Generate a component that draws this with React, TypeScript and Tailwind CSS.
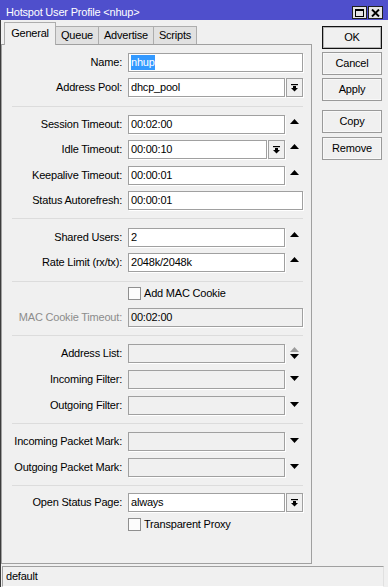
import React from "react";

type Kind = "full" | "spin" | "drop" | "dropspin" | "down" | "updown";

function UpTri({ gray }: { gray?: boolean }) {
  return (
    <svg width="9" height="5" viewBox="0 0 9 5" className="block">
      <polygon points="0,5 9,5 4.5,0" fill={gray ? "#9c9c9c" : "#000"} />
    </svg>
  );
}

function DownTri() {
  return (
    <svg width="9" height="5" viewBox="0 0 9 5" className="block">
      <polygon points="0,0 9,0 4.5,5" fill="#000" />
    </svg>
  );
}

function DropBtn() {
  return (
    <div className="w-[17px] h-[19px] shrink-0 border border-[#a0a0a0] bg-[#f0f0f0] shadow-[1px_1px_0_#ffffff] flex items-center justify-center">
      <svg width="7" height="8" viewBox="0 0 7 8" className="block">
        <rect x="0" y="0" width="7" height="1.2" fill="#000" />
        <rect x="2" y="2" width="3" height="2" fill="#000" />
        <polygon points="0,4 7,4 3.5,7.6" fill="#000" />
      </svg>
    </div>
  );
}

function Row({
  label,
  value,
  kind = "full",
  disabled,
  labelGray,
  selected,
  className,
}: {
  label: string;
  value?: string;
  kind?: Kind;
  disabled?: boolean;
  labelGray?: boolean;
  selected?: boolean;
  className?: string;
}) {
  return (
    <div className={`flex h-[19px] ${className ?? ""}`}>
      <div
        className={`w-[120px] shrink-0 flex items-center justify-end whitespace-nowrap ${
          labelGray ? "text-[#8c8c8c]" : "text-black"
        }`}
      >
        {label}
      </div>
      <div className="ml-[6px] w-[175px] flex gap-[1px]">
        <div
          className={`flex-1 min-w-0 h-[19px] border border-[#a0a0a0] shadow-[1px_1px_0_#ffffff] ${
            disabled ? "bg-[#f0f0f0]" : "bg-white"
          } flex items-center px-[2px] whitespace-nowrap overflow-hidden text-black`}
        >
          {selected ? (
            <span className="bg-[#3399ff] text-white leading-[15px] inline-block">{value}</span>
          ) : (
            value
          )}
        </div>
        {(kind === "drop" || kind === "dropspin") && <DropBtn />}
        {(kind === "spin" || kind === "dropspin") && (
          <div className="w-[17px] shrink-0 flex justify-center pt-[4px]">
            <UpTri />
          </div>
        )}
        {kind === "down" && (
          <div className="w-[17px] shrink-0 flex justify-center pt-[6px]">
            <DownTri />
          </div>
        )}
        {kind === "updown" && (
          <div className="w-[17px] shrink-0 flex flex-col items-center pt-[3px] gap-[2px]">
            <UpTri gray />
            <DownTri />
          </div>
        )}
      </div>
    </div>
  );
}

function Sep({ className }: { className?: string }) {
  return <div className={`ml-[10px] w-[291px] h-px bg-[#dcdcdc] ${className ?? ""}`} />;
}

function Check({ label, className }: { label: string; className?: string }) {
  return (
    <div className={`flex h-[13px] items-center ${className ?? ""}`}>
      <div className="w-[126px] shrink-0" />
      <div className="w-[13px] h-[13px] shrink-0 border border-[#8f8f8f] bg-[#fcfcfc]" />
      <span className="ml-[3px] whitespace-nowrap text-black">{label}</span>
    </div>
  );
}

function Btn({ children, def, className }: { children: React.ReactNode; def?: boolean; className?: string }) {
  return (
    <div
      className={`w-[60px] h-[23px] flex items-center justify-center bg-[#f0f0f0] text-black ${
        def
          ? "border border-[#111111] shadow-[inset_0_0_0_1px_#b4b4b4]"
          : "border border-[#9a9a9a] shadow-[inset_0_0_0_1px_#f8f8f8]"
      } ${className ?? ""}`}
    >
      {children}
    </div>
  );
}

export default function App() {
  return (
    <div className="w-[388px] h-[587px] bg-[#f0f0f0] flex flex-col overflow-hidden font-['Liberation_Sans',Arial,sans-serif] text-[11px] leading-none tracking-[-0.2px] text-black">
      {/* Title bar */}
      <div className="h-[20px] shrink-0 bg-[#4f4fcc] flex items-start">
        <span className="ml-[6px] mt-[6px] text-white leading-[13px] whitespace-nowrap">
          Hotspot User Profile &lt;nhup&gt;
        </span>
        <div className="ml-auto mr-[5px] mt-[6px] flex gap-[1px]">
          <div className="w-[15px] h-[13px] bg-[#e4e4e4] border border-[#202020] flex items-center justify-center">
            <svg width="9" height="8" viewBox="0 0 9 8" className="block">
              <rect x="0.5" y="0.5" width="8" height="7" fill="none" stroke="#000" strokeWidth="1" />
              <rect x="0" y="0" width="9" height="2" fill="#000" />
            </svg>
          </div>
          <div className="w-[15px] h-[13px] bg-[#e4e4e4] border border-[#202020] flex items-center justify-center">
            <svg width="9" height="8" viewBox="0 0 9 8" className="block">
              <path d="M1 0.5 L8 7.5 M8 0.5 L1 7.5" stroke="#000" strokeWidth="1.9" />
            </svg>
          </div>
        </div>
      </div>

      <div className="flex-1 flex flex-col border-l border-[#3c3c3c]">
        {/* Body */}
        <div className="flex-1 flex pb-[2px]">
          {/* Left: tabs + panel */}
          <div className="w-[311px] shrink-0 flex flex-col pt-[2px]">
            <div className="h-[22px] flex items-end pl-[3px]">
              <div className="relative z-10 w-[52px] h-[23px] -mb-px bg-[#f0f0f0] border border-b-0 border-[#adadad] flex items-center justify-center pb-[1px]">
                General
              </div>
              <div className="w-[44px] h-[18px] -ml-px bg-[#e1e1e1] border border-b-0 border-[#adadad] flex items-center justify-center">
                Queue
              </div>
              <div className="w-[56px] h-[18px] -ml-px bg-[#e1e1e1] border border-b-0 border-[#adadad] flex items-center justify-center">
                Advertise
              </div>
              <div className="w-[44px] h-[18px] -ml-px bg-[#e1e1e1] border border-b-0 border-[#adadad] flex items-center justify-center">
                Scripts
              </div>
            </div>
            <div className="flex-1 border border-[#a0a0a0] flex flex-col pt-[8px]">
              <Row label="Name:" value="nhup" selected />
              <Row label="Address Pool:" value="dhcp_pool" kind="drop" className="mt-[6px]" />
              <Sep className="mt-[9px]" />
              <Row label="Session Timeout:" value="00:02:00" kind="spin" className="mt-[8px]" />
              <Row label="Idle Timeout:" value="00:00:10" kind="dropspin" className="mt-[6px]" />
              <Row label="Keepalive Timeout:" value="00:00:01" kind="spin" className="mt-[7px]" />
              <Row label="Status Autorefresh:" value="00:00:01" className="mt-[6px]" />
              <Sep className="mt-[8px]" />
              <Row label="Shared Users:" value="2" kind="spin" className="mt-[9px]" />
              <Row label="Rate Limit (rx/tx):" value="2048k/2048k" kind="spin" className="mt-[6px]" />
              <Sep className="mt-[9px]" />
              <Check label="Add MAC Cookie" className="mt-[5px]" />
              <Row label="MAC Cookie Timeout:" value="00:02:00" disabled labelGray className="mt-[8px]" />
              <Sep className="mt-[8px]" />
              <Row label="Address List:" kind="updown" disabled className="mt-[8px]" />
              <Row label="Incoming Filter:" kind="down" disabled className="mt-[7px]" />
              <Row label="Outgoing Filter:" kind="down" disabled className="mt-[7px]" />
              <Sep className="mt-[8px]" />
              <Row label="Incoming Packet Mark:" kind="down" disabled className="mt-[8px]" />
              <Row label="Outgoing Packet Mark:" kind="down" disabled className="mt-[7px]" />
              <Sep className="mt-[8px]" />
              <Row label="Open Status Page:" value="always" kind="drop" className="mt-[7px]" />
              <Check label="Transparent Proxy" className="mt-[6px]" />
            </div>
          </div>

          {/* Right: buttons */}
          <div className="flex flex-col pl-[10px] pt-[6px]">
            <Btn def>OK</Btn>
            <Btn className="mt-[3px]">Cancel</Btn>
            <Btn className="mt-[3px]">Apply</Btn>
            <Btn className="mt-[9px]">Copy</Btn>
            <Btn className="mt-[4px]">Remove</Btn>
          </div>
        </div>

        {/* Status bar */}
        <div className="ml-[1px] w-[382px] h-[21px] shrink-0 border-t border-l border-[#a0a0a0] border-r border-b border-r-[#e0e0e0] border-b-white flex items-center pl-[3px]">
          default
        </div>
      </div>
    </div>
  );
}
